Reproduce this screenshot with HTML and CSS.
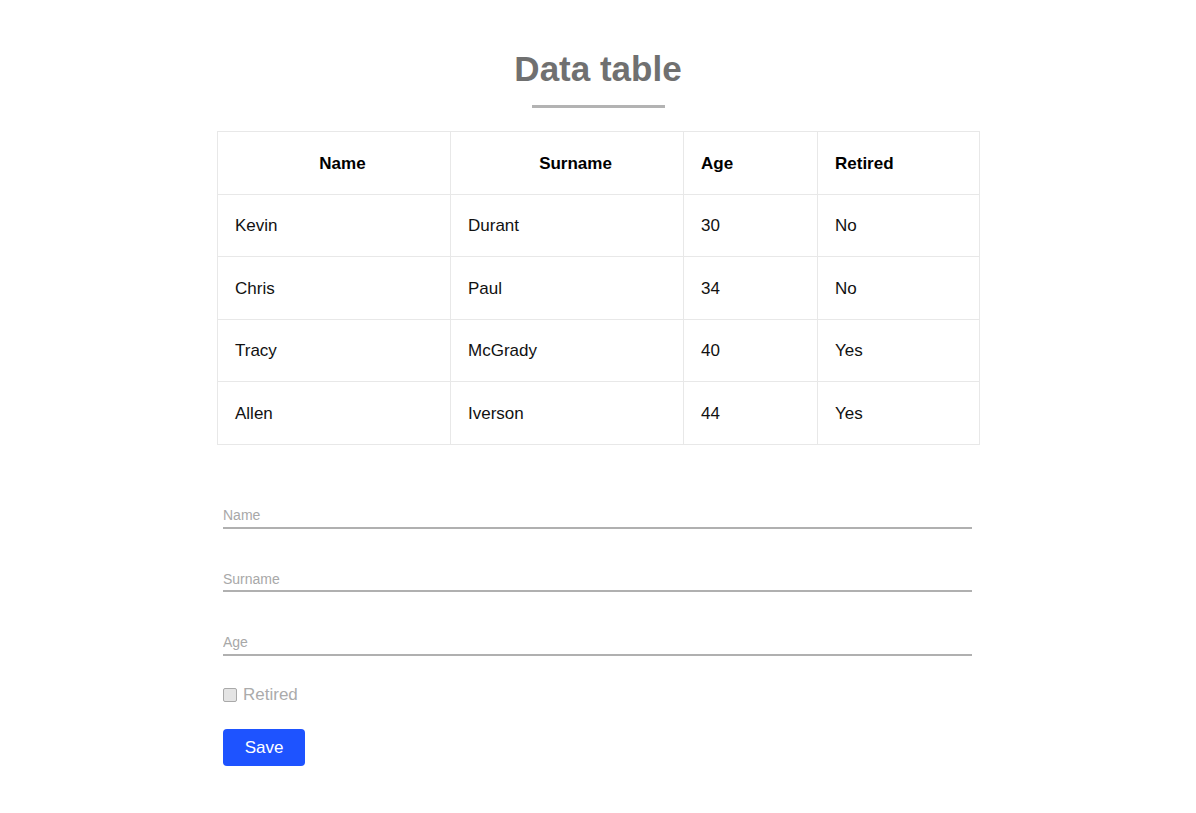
FILE: index.html
```html
<!DOCTYPE html>
<html>
<head>
<meta charset="utf-8">
<link rel="stylesheet" href="styles.css">
</head>
<body>
<main class="page">
  <header class="title-wrap">
    <h1 class="title">Data table</h1>
    <div class="title-rule"></div>
  </header>
  <table class="data">
    <colgroup>
      <col class="c1"><col class="c2"><col class="c3"><col class="c4">
    </colgroup>
    <thead>
      <tr>
        <th class="center">Name</th>
        <th class="center">Surname</th>
        <th>Age</th>
        <th>Retired</th>
      </tr>
    </thead>
    <tbody>
      <tr><td>Kevin</td><td>Durant</td><td>30</td><td>No</td></tr>
      <tr><td>Chris</td><td>Paul</td><td>34</td><td>No</td></tr>
      <tr><td>Tracy</td><td>McGrady</td><td>40</td><td>Yes</td></tr>
      <tr><td>Allen</td><td>Iverson</td><td>44</td><td>Yes</td></tr>
    </tbody>
  </table>
  <form class="form">
    <input class="field" type="text" placeholder="Name">
    <input class="field" type="text" placeholder="Surname">
    <input class="field" type="text" placeholder="Age">
    <label class="check"><input type="checkbox" class="box" disabled><span>Retired</span></label>
    <button type="button" class="save">Save</button>
  </form>
</main>
</body>
</html>
```
FILE: styles.css
```css
* { box-sizing: border-box; }
html, body { margin: 0; padding: 0; background: #fff; }
body { font-family: "Liberation Sans", Arial, sans-serif; color: #111; }
.page { width: 762px; margin: 0 auto; padding-top: 47px; }
.title-wrap { display: flex; flex-direction: column; align-items: center; }
.title { margin: 0; font-size: 35px; line-height: 44px; font-weight: bold; color: #707070; }
.title-rule { width: 133px; height: 3px; background: #b3b3b3; margin-top: 14px; }
.data { width: 762px; table-layout: fixed; margin-top: 23px; border-collapse: collapse; font-size: 17px; }
.c1 { width: 233px; }
.c2 { width: 233px; }
.c3 { width: 134px; }
.c4 { width: 162px; }
.data th, .data td { border: 1px solid #e8e8e8; height: 62.5px; padding: 2px 16px 0 17px; text-align: left; color: #111; }
.data th { font-weight: bold; color: #000; }
.data th.center { text-align: center; padding-right: 0; }
.form { display: flex; flex-direction: column; align-items: flex-start; padding: 0 6px; margin-top: 59px; }
.field { width: 749px; border: none; border-bottom: 2px solid #b0b0b0; outline: none; font-family: "Liberation Sans", Arial, sans-serif; font-size: 14px; height: 25px; padding: 0; margin-bottom: 38.5px; background: transparent; }
.field::placeholder { color: #a8a8a8; }
.check { display: flex; align-items: center; font-size: 17px; color: #ababab; margin-top: -9px; }
.box { appearance: none; -webkit-appearance: none; width: 14px; height: 14px; margin: 0 6px 0 0; background: #e4e4e4; border: 1px solid #a9a9a9; border-radius: 2px; }
.save { margin-top: 24px; width: 82px; height: 37px; background: #1e53ff; color: #fff; border: none; border-radius: 4px; font-family: "Liberation Sans", Arial, sans-serif; font-size: 17px; padding: 0; }
```
